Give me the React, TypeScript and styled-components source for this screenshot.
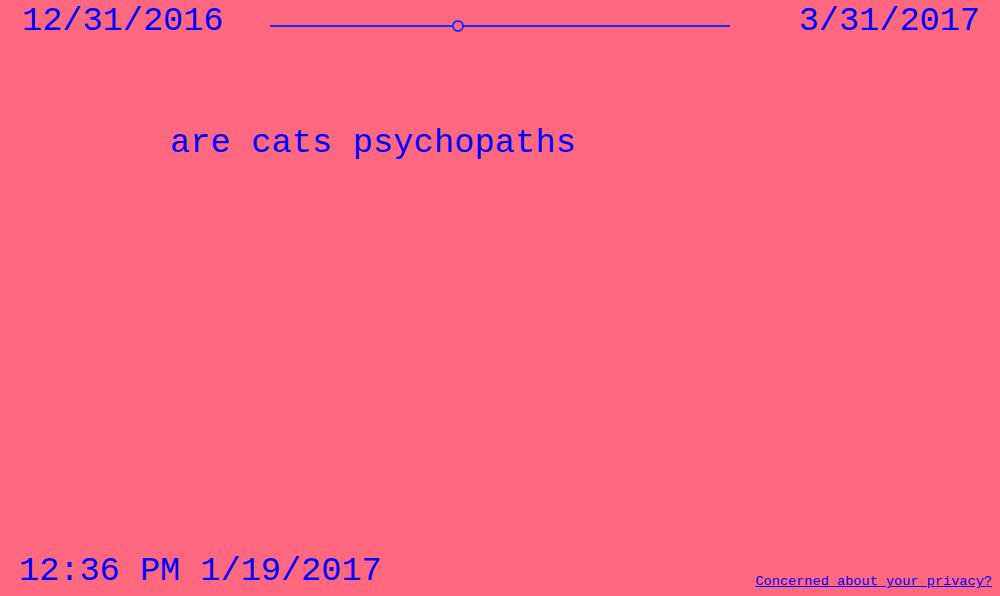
import React from "react";
import styled, { createGlobalStyle } from "styled-components";

const Global = createGlobalStyle`
  html, body { margin: 0; padding: 0; background: #ff687e; }
  body { font-family: "Liberation Mono", "Courier New", monospace; color: #0000ff; }
`;

const Page = styled.div`
  width: 1000px;
  height: 596px;
  display: flex;
  flex-direction: column;
  background: #ff687e;
  overflow: hidden;
`;

const TopBar = styled.div`
  display: flex;
  align-items: center;
  padding: 2px 20px 0 22px;
  height: 38px;
`;

const BigText = styled.div<{ $push?: boolean }>`
  font-size: 33.6px;
  line-height: 38px;
  white-space: nowrap;
  margin-left: ${(p) => (p.$push ? "auto" : "0")};
`;

const Query = styled(BigText)`
  letter-spacing: 0.15px;
`;

const Track = styled.div`
  position: relative;
  width: 460px;
  height: 2px;
  background: #1a2aff;
  margin: 10px 0 0 46px;
`;

const Knob = styled.div<{ $pos: number }>`
  position: absolute;
  top: -5px;
  left: ${(p) => p.$pos}px;
  width: 8px;
  height: 8px;
  border: 2px solid #1a2aff;
  border-radius: 50%;
  background: #ff687e;
`;

const Main = styled.div`
  flex: 1;
  padding: 84px 0 0 170px;
`;

const Footer = styled.div`
  display: flex;
  align-items: flex-end;
  justify-content: space-between;
  padding: 0 8px 6px 19px;
`;

const PrivacyLink = styled.a`
  font-size: 13.6px;
  color: #0000ff;
  text-decoration: underline;
  margin-bottom: 1px;
`;

export default function App() {
  return (
    <>
      <Global />
      <Page>
        <TopBar>
          <BigText>12/31/2016</BigText>
          <Track>
            <Knob $pos={182} />
          </Track>
          <BigText $push>3/31/2017</BigText>
        </TopBar>
        <Main>
          <Query>are cats psychopaths</Query>
        </Main>
        <Footer>
          <BigText>12:36 PM 1/19/2017</BigText>
          <PrivacyLink href="#">Concerned about your privacy?</PrivacyLink>
        </Footer>
      </Page>
    </>
  );
}
